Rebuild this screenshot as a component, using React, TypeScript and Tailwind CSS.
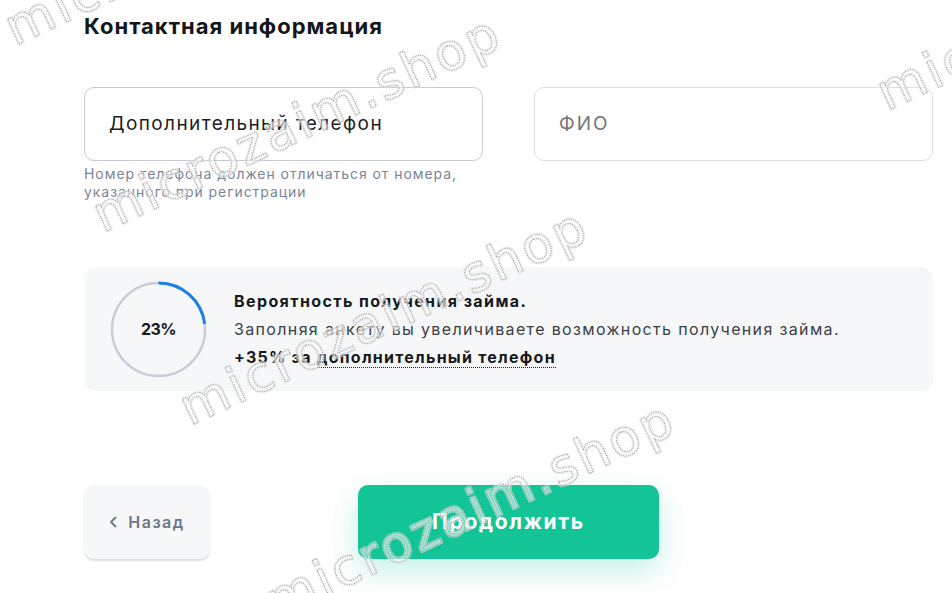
import React from "react";

// Watermark baseline origins (x, y) for the repeated diagonal label
const marks: [number, number][] = [
  [15, 46],
  [103, 233],
  [190, 426],
  [277, 619],
  [887, 111],
];

function ProgressRing({ value }: { value: number }) {
  const r = 46.5;
  const c = 2 * Math.PI * r;
  return (
    <div className="relative w-[97px] h-[97px] shrink-0">
      <svg width="97" height="97" viewBox="0 0 97 97" className="absolute inset-0">
        <circle cx="48.5" cy="48.5" r={r} fill="none" stroke="#c8ced9" strokeWidth="2.5" />
        <circle
          cx="48.5"
          cy="48.5"
          r={r}
          fill="none"
          stroke="#1d7fe3"
          strokeWidth="3"
          strokeDasharray={`${(c * value) / 100} ${c}`}
          transform="rotate(-90 48.5 48.5)"
        />
      </svg>
      <div className="absolute inset-0 flex items-center justify-center text-[16px] font-bold text-[#16181c] tracking-[-0.5px]">
        {value}%
      </div>
    </div>
  );
}

export default function App() {
  return (
    <div className="relative w-[952px] h-[593px] overflow-hidden bg-white font-[Inter,'Noto_Sans',sans-serif]">
      <div className="w-[933px] pl-[84px] pt-[11px]">
        <h2 className="text-[22px] leading-[30px] font-bold text-[#14161a] tracking-[1px]">
          Контактная информация
        </h2>

        <div className="mt-[46px] grid grid-cols-2 gap-[51px]">
          <div>
            <div className="h-[74px] rounded-[10px] border border-[#c6cad2] flex items-center px-[24px] text-[19px] text-[#1b1d21] tracking-[1.4px]">
              Дополнительный телефон
            </div>
            <p className="mt-[4px] text-[14px] leading-[18px] text-[#7b8598] tracking-[0.95px]">
              Номер телефона должен отличаться от номера,
              <br />
              указанного при регистрации
            </p>
          </div>
          <div>
            <div className="h-[74px] rounded-[10px] border border-[#dddfe3] flex items-center px-[24px] text-[19px] text-[#767676] tracking-[2px]">
              ФИО
            </div>
          </div>
        </div>

        <div className="mt-[66px] h-[124px] rounded-[12px] bg-[#f5f7f8] flex items-center pl-[26px] gap-[27px]">
          <ProgressRing value={23} />
          <div className="flex flex-col leading-[28px] text-[#16181c]">
            <span className="text-[16px] font-bold tracking-[1.4px]">Вероятность получения займа.</span>
            <span className="text-[16px] text-[#3a3e45] tracking-[1.35px]">
              Заполняя анкету вы увеличиваете возможность получения займа.
            </span>
            <span className="text-[16px] font-bold tracking-[1.25px]">
              +35% за{" "}
              <span className="border-b border-dotted border-[#222] leading-[20px] inline-block">
                дополнительный телефон
              </span>
            </span>
          </div>
        </div>

        <div className="mt-[94px] flex gap-[148px]">
          <button className="w-[126px] h-[74px] rounded-[10px] bg-[#f5f7f8] shadow-[0_2px_2px_rgba(0,0,0,0.13)] flex items-center justify-center gap-[11px] text-[16px] font-semibold text-[#6b7689] tracking-[1.5px]">
            <svg width="8" height="12" viewBox="0 0 8 12">
              <path d="M6.5 1.5 L2 6 L6.5 10.5" fill="none" stroke="#6b7689" strokeWidth="1.8" strokeLinecap="round" strokeLinejoin="round" />
            </svg>
            Назад
          </button>
          <button className="w-[301px] h-[74px] rounded-[10px] bg-[#13c497] shadow-[0_12px_30px_rgba(19,196,151,0.25)] flex items-center justify-center text-[21px] font-bold text-white tracking-[1.7px]">
            Продолжить
          </button>
        </div>
      </div>

      <svg className="absolute inset-0 pointer-events-none" width="952" height="593">
        {marks.map(([x, y]) => (
          <g key={`${x}-${y}`} transform={`rotate(-25 ${x} ${y})`}>
            <text
              x={x}
              y={y}
              fontFamily="DejaVu Sans, sans-serif"
              fontSize="50"
              letterSpacing="3.5"
              fill="none"
              stroke="#e0e0e0"
              strokeWidth="3"
              strokeLinejoin="round"
              opacity="0.6"
            >
              microzaim.shop
            </text>
            <text
              x={x}
              y={y}
              fontFamily="DejaVu Sans, sans-serif"
              fontSize="50"
              letterSpacing="3.5"
              fill="#ffffff"
              fillOpacity="0.4"
              stroke="#8a8a8a"
              strokeWidth="0.7"
              strokeDasharray="1 1.4"
            >
              microzaim.shop
            </text>
          </g>
        ))}
      </svg>
    </div>
  );
}
